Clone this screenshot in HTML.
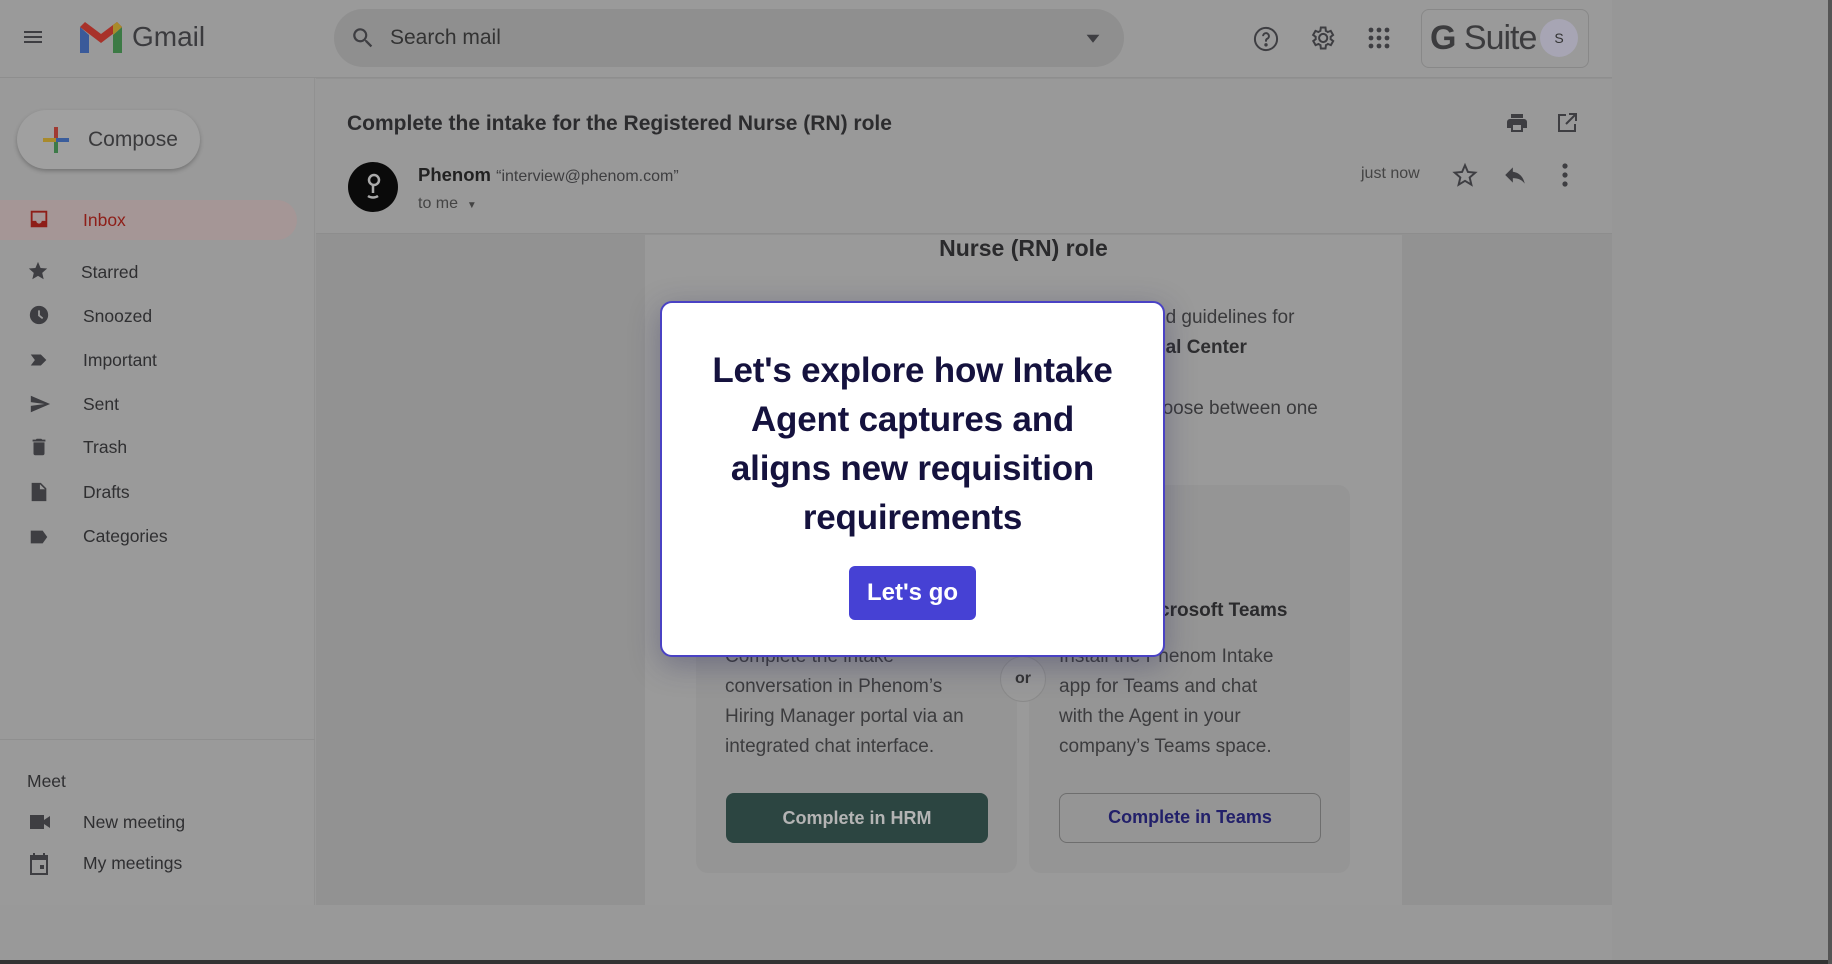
<!DOCTYPE html>
<html><head><meta charset="utf-8"><style>
*{margin:0;padding:0;box-sizing:border-box}
body{width:1832px;height:964px;overflow:hidden;background:#999;font-family:"Liberation Sans",sans-serif;position:relative;color:#2e2e30}
.a{position:absolute}
.t{position:absolute;white-space:nowrap}
.ic{position:absolute;fill:#3e3e42}
.nav{font-size:17.5px;color:#2f2f31}
.body{font-size:19px;color:#3a3a3c}
.ln{font-size:19px;color:#3c3c3e;line-height:30px}
</style></head><body>
<div class="a" style="left:0;top:0;width:1612px;height:78px;background:#9a9a9a;border-bottom:1px solid #8e8e8e"></div>
<div class="a" style="left:1612px;top:0;width:220px;height:964px;background:#979797"></div>
<svg class="ic" style="left:21px;top:25px" width="24" height="24" viewBox="0 0 24 24"><path d="M3 6h18v2H3zM3 11h18v2H3zM3 16h18v2H3z"/></svg>
<svg class="a" style="left:78px;top:21px" width="46" height="34" viewBox="0 0 46 34"><path d="M2 6v26h9V14z" fill="#3a5a9a"/><path d="M35 14v18h9V6z" fill="#3c7a45"/><path d="M2 6l21 16 21-16-5-5-16 12L7 1z" fill="#a8322a"/><path d="M35 14l9-8-5-5-4 3z" fill="#a88a2a"/></svg>
<div class="t" style="left:132px;top:21px;font-size:28px;color:#3b3b3e">Gmail</div>
<div class="a" style="left:334px;top:9px;width:790px;height:58px;border-radius:29px;background:#8f8f8f"></div>
<svg class="ic" style="left:350px;top:25px" width="26" height="26" viewBox="0 0 24 24"><path d="M15.5 14h-.8l-.3-.3A6.5 6.5 0 1 0 9.5 16a6.5 6.5 0 0 0 4.2-1.6l.3.3v.8l5 5 1.5-1.5zm-6 0a4.5 4.5 0 1 1 0-9 4.5 4.5 0 0 1 0 9z"/></svg>
<div class="t" style="left:390px;top:26px;font-size:21px;color:#333">Search mail</div>
<svg class="ic" style="left:1085px;top:30px" width="16" height="16" viewBox="0 0 10 10"><path d="M1 3h8L5 8z"/></svg>
<svg class="a" style="left:1252px;top:25px" width="28" height="28" viewBox="0 0 24 24" fill="none" stroke="#3e3e42" stroke-width="1.7"><circle cx="12" cy="12" r="9.5"/><path d="M9.5 9.5a2.5 2.5 0 1 1 3.5 2.3c-.7.4-1 .9-1 1.7v.8"/><circle cx="12" cy="17" r=".6" fill="#3e3e42"/></svg>
<svg class="ic" style="left:1308px;top:24px" width="28" height="28" viewBox="0 0 24 24"><path d="M19.4 13a7.5 7.5 0 0 0 0-2l2.1-1.6-2-3.5-2.5 1a7 7 0 0 0-1.7-1L15 3h-4l-.4 2.9a7 7 0 0 0-1.7 1l-2.5-1-2 3.5L6.6 11a7.5 7.5 0 0 0 0 2l-2.1 1.6 2 3.5 2.5-1a7 7 0 0 0 1.7 1L11 21h4l.4-2.9a7 7 0 0 0 1.7-1l2.5 1 2-3.5zM13 15.5a3.5 3.5 0 1 1 0-7 3.5 3.5 0 0 1 0 7z" fill="none" stroke="#3e3e42" stroke-width="1.7"/></svg>
<svg class="ic" style="left:1368px;top:27px" width="22" height="22" viewBox="0 0 22 22"><circle cx="3" cy="3" r="2.4"/><circle cx="11" cy="3" r="2.4"/><circle cx="19" cy="3" r="2.4"/><circle cx="3" cy="11" r="2.4"/><circle cx="11" cy="11" r="2.4"/><circle cx="19" cy="11" r="2.4"/><circle cx="3" cy="19" r="2.4"/><circle cx="11" cy="19" r="2.4"/><circle cx="19" cy="19" r="2.4"/></svg>
<div class="a" style="left:1421px;top:9px;width:168px;height:59px;border:1px solid #888;border-radius:8px"></div>
<div class="t" style="left:1430px;top:19px;font-size:34px;color:#3c3c3e;letter-spacing:-1px"><b>G</b> Suite</div>
<div class="a" style="left:1540px;top:19px;width:38px;height:38px;border-radius:50%;background:#a7a5b4;font-size:14px;text-align:center;line-height:38px;color:#333">S</div>
<div class="a" style="left:0;top:78px;width:315px;height:827px;background:#9a9a9a;border-right:1px solid #919191"></div>
<div class="a" style="left:17px;top:110px;width:183px;height:59px;border-radius:30px;background:#a0a0a0;box-shadow:0 2px 4px rgba(0,0,0,.25)"></div>
<svg class="a" style="left:40px;top:124px" width="32" height="32" viewBox="0 0 32 32"><rect x="14" y="3" width="4" height="13" fill="#a03a32"/><rect x="14" y="16" width="4" height="13" fill="#3d7a48"/><rect x="3" y="14" width="13" height="4" fill="#a88a2c"/><rect x="16" y="14" width="13" height="4" fill="#3a5d9c"/></svg>
<div class="t" style="left:88px;top:128px;font-size:21px;color:#3a3a3c">Compose</div>
<div class="a" style="left:0;top:200px;width:297px;height:40px;border-radius:0 20px 20px 0;background:#a59696"></div>
<svg class="a" style="left:28px;top:208px" width="22" height="22" viewBox="0 0 24 24"><path d="M3 3h18v18H3z M5 5v9h4a3 3 0 0 0 6 0h4V5z" fill="#8e1e18" fill-rule="evenodd"/></svg>
<div class="t nav" style="left:83px;top:210px;color:#8e1e18">Inbox</div>
<svg class="ic" style="left:27px;top:260px" width="22" height="22" viewBox="0 0 24 24"><path d="M12 17.3l6.2 3.7-1.6-7 5.4-4.7-7.2-.6L12 2 9.2 8.7 2 9.3l5.4 4.7-1.6 7z"/></svg>
<div class="t nav" style="left:81px;top:262px">Starred</div>
<svg class="ic" style="left:28px;top:304px" width="22" height="22" viewBox="0 0 24 24"><path d="M12 2a10 10 0 1 0 0 20 10 10 0 0 0 0-20zm3.5 14.5L11 13V7h2v5l3.5 2.8z"/></svg>
<div class="t nav" style="left:83px;top:306px">Snoozed</div>
<svg class="ic" style="left:28px;top:349px" width="22" height="22" viewBox="0 0 24 24"><path d="M3 18l4.5-6L3 6h11l6 6-6 6z"/></svg>
<div class="t nav" style="left:83px;top:350px">Important</div>
<svg class="ic" style="left:28px;top:393px" width="24" height="22" viewBox="0 0 24 24"><path d="M2 21l21-9L2 3v7l15 2-15 2z"/></svg>
<div class="t nav" style="left:83px;top:394px">Sent</div>
<svg class="ic" style="left:28px;top:436px" width="22" height="22" viewBox="0 0 24 24"><path d="M6 19a2 2 0 0 0 2 2h8a2 2 0 0 0 2-2V7H6zM19 4h-3.5l-1-1h-5l-1 1H5v2h14z"/></svg>
<div class="t nav" style="left:83px;top:437px">Trash</div>
<svg class="ic" style="left:28px;top:481px" width="22" height="22" viewBox="0 0 24 24"><path d="M6 2h8l6 6v14H4V2zm7 1.5V9h5.5z"/></svg>
<div class="t nav" style="left:83px;top:482px">Drafts</div>
<svg class="ic" style="left:28px;top:526px" width="22" height="22" viewBox="0 0 24 24"><path d="M3 5h13l5 7-5 7H3z"/></svg>
<div class="t nav" style="left:83px;top:526px">Categories</div>
<div class="a" style="left:0;top:739px;width:315px;height:1px;background:#8f8f8f"></div>
<div class="t nav" style="left:27px;top:771px">Meet</div>
<svg class="ic" style="left:28px;top:812px" width="24" height="20" viewBox="0 0 24 20"><path d="M2 3h14v5l6-4v12l-6-4v5H2z"/></svg>
<div class="t nav" style="left:83px;top:812px">New meeting</div>
<svg class="ic" style="left:28px;top:852px" width="22" height="24" viewBox="0 0 22 24"><path d="M5 1h2v2h8V1h2v2h3v20H2V3h3zm-1 7v13h14V8zm8 5h4v4h-4z"/></svg>
<div class="t nav" style="left:83px;top:853px">My meetings</div>
<div class="a" style="left:316px;top:78px;width:1296px;height:827px;background:#929292"></div>
<div class="a" style="left:316px;top:79px;width:1296px;height:155px;background:#999;border-bottom:1px solid #8d8d8d"></div>
<div class="a" style="left:645px;top:235px;width:757px;height:670px;background:#9a9a9a"></div>
<div class="t" style="left:347px;top:112px;font-size:21px;font-weight:bold;color:#2c2c2e">Complete the intake for the Registered Nurse (RN) role</div>
<svg class="ic" style="left:1505px;top:111px" width="24" height="24" viewBox="0 0 24 24"><path d="M19 8H5a3 3 0 0 0-3 3v6h4v4h12v-4h4v-6a3 3 0 0 0-3-3zm-3 11H8v-5h8zM18 3H6v4h12z"/></svg>
<svg class="a" style="left:1555px;top:111px" width="24" height="24" viewBox="0 0 24 24" fill="none" stroke="#3e3e42" stroke-width="2"><path d="M11 4H4v16h16v-7M14 3h7v7M21 3L11 13"/></svg>
<div class="a" style="left:348px;top:162px;width:50px;height:50px;border-radius:50%;background:#0a0a0a"></div>
<svg class="a" style="left:360px;top:170px" width="26" height="34" viewBox="0 0 26 34" fill="none" stroke="#aaa" stroke-width="2.5"><circle cx="14" cy="10" r="5"/><path d="M13 15v8M8 26c3 2 7 2 10 0"/></svg>
<div class="t" style="left:418px;top:164px;font-size:18.5px;color:#222"><b>Phenom</b> <span style="font-size:16px;color:#3e3e40">“interview@phenom.com”</span></div>
<div class="t" style="left:418px;top:195px;font-size:16px;color:#444">to me &nbsp;<span style="font-size:10px">▼</span></div>
<div class="t" style="left:1361px;top:165px;font-size:16px;color:#444">just now</div>
<svg class="a" style="left:1452px;top:162px" width="26" height="26" viewBox="0 0 24 24" fill="none" stroke="#3e3e42" stroke-width="1.8"><path d="M12 3l2.7 6.2 6.8.6-5.2 4.5 1.6 6.7L12 17.4 6.1 21l1.6-6.7-5.2-4.5 6.8-.6z"/></svg>
<svg class="ic" style="left:1502px;top:162px" width="26" height="26" viewBox="0 0 24 24"><path d="M10 9V5l-7 7 7 7v-4.1c5 0 8.5 1.6 11 5.1-1-5-4-10-11-11z"/></svg>
<svg class="ic" style="left:1556px;top:162px" width="18" height="26" viewBox="0 0 18 26"><circle cx="9" cy="4" r="2.6"/><circle cx="9" cy="13" r="2.6"/><circle cx="9" cy="22" r="2.6"/></svg>
<div class="t" style="left:645px;width:757px;text-align:center;top:235px;font-size:23px;font-weight:bold;color:#2a2a2c">Nurse (RN) role</div>
<div class="t body" style="left:1155px;top:307px">nd guidelines for</div>
<div class="t body" style="left:1155px;top:337px;font-weight:bold;color:#2e2e30">cal Center</div>
<div class="t body" style="left:1152px;top:398px">hoose between one</div>
<div class="a" style="left:696px;top:485px;width:321px;height:388px;border-radius:12px;background:#959595"></div>
<div class="a" style="left:1029px;top:485px;width:321px;height:388px;border-radius:12px;background:#959595"></div>
<div class="t" style="left:1159px;top:600px;font-size:19px;font-weight:bold;color:#2a2a2c">crosoft Teams</div>
<div class="t ln" style="left:725px;top:642px">Complete the intake<br>conversation in Phenom’s<br>Hiring Manager portal via an<br>integrated chat interface.</div>
<div class="t ln" style="left:1059px;top:642px">Install the Phenom Intake<br>app for Teams and chat<br>with the Agent in your<br>company’s Teams space.</div>
<div class="a" style="left:1000px;top:656px;width:46px;height:46px;border-radius:50%;background:#999;border:1px solid #8a8a8a;text-align:center;line-height:44px;font-size:16px;font-weight:bold;color:#333">or</div>
<div class="a" style="left:726px;top:793px;width:262px;height:50px;border-radius:8px;background:#2c4541;color:#b4b4b4;font-size:18px;font-weight:bold;text-align:center;line-height:50px">Complete in HRM</div>
<div class="a" style="left:1059px;top:793px;width:262px;height:50px;border-radius:8px;border:1.5px solid #6e6e6e;color:#22206a;font-size:18px;font-weight:bold;text-align:center;line-height:47px">Complete in Teams</div>
<div class="a" style="left:660px;top:301px;width:505px;height:356px;background:#fff;border:2px solid #4a42c4;border-radius:12px;box-shadow:0 8px 30px rgba(40,40,90,.35)"></div>
<div class="a" style="left:660px;top:346px;width:505px;text-align:center;font-size:35px;line-height:49px;font-weight:bold;color:#15123e;letter-spacing:-.2px">Let's explore how Intake<br>Agent captures and<br>aligns new requisition<br>requirements</div>
<div class="a" style="left:849px;top:566px;width:127px;height:54px;border-radius:6px;background:#4641d4;color:#fff;font-size:24px;font-weight:bold;text-align:center;line-height:54px">Let's go</div>
<div class="a" style="left:0;top:960px;width:1832px;height:4px;background:#333"></div>
<div class="a" style="left:1828px;top:0;width:4px;height:964px;background:#555"></div>
</body></html>
